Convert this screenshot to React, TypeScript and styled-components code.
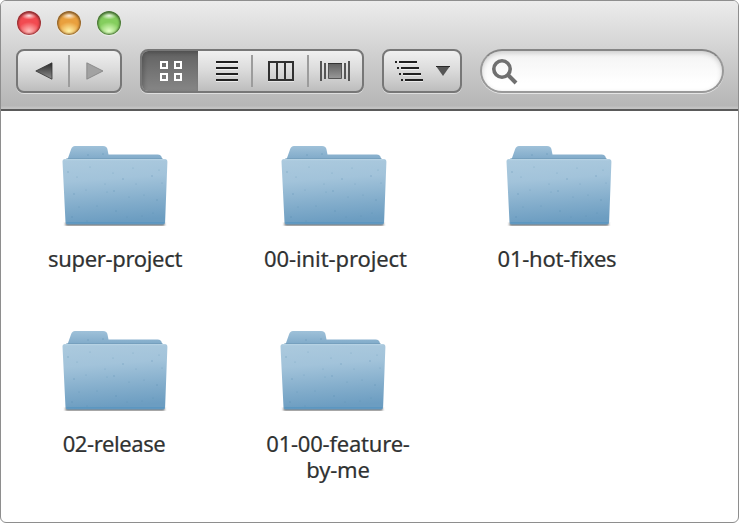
import React from "react";
import styled, { createGlobalStyle } from "styled-components";

const GlobalStyle = createGlobalStyle`
  * { box-sizing: border-box; }
  html, body { margin: 0; background: #fff; overflow: hidden; }
`;

const Window = styled.main`
  width: 739px;
  height: 523px;
  border: 1px solid #8e8e8e;
  border-radius: 6px;
  background: #fff;
  overflow: hidden;
  font-family: "Noto Sans", "Open Sans", sans-serif;
`;

const Header = styled.header`
  height: 110px;
  padding: 9px 14px 0 15px;
  border-bottom: 2px solid #5a5a5a;
  background: linear-gradient(#ececec 0%, #dedede 25%, #cbcbcb 58%, #b6b6b6 97%, #c3c3c3 99%);
`;

const Lights = styled.div`
  display: flex;
  gap: 16px;
  padding: 1px 0 0 1px;
  height: 39px;
`;

const Light = styled.span<{ $rim: string; $mid: string; $glow: string }>`
  width: 24px;
  height: 24px;
  border-radius: 50%;
  background:
    radial-gradient(ellipse 8px 4px at 50% 4.5px, rgba(255,255,255,.85), rgba(255,255,255,0)),
    radial-gradient(ellipse 11px 9px at 50% 20px, ${p => p.$glow}, transparent),
    ${p => p.$mid};
  box-shadow: inset 0 0 2px 1.2px ${p => p.$rim}, inset 0 2px 3px ${p => p.$rim}, 0 1px 1px rgba(255,255,255,.5);
`;

const Toolbar = styled.div`
  display: flex;
  height: 44px;
`;

const ButtonGroup = styled.div<{ $width: number; $gap: number }>`
  display: flex;
  width: ${p => p.$width}px;
  margin-right: ${p => p.$gap}px;
  height: 44px;
  border: 2px solid #777;
  border-radius: 8px;
  overflow: hidden;
  background: linear-gradient(#f0f0f0, #dadada 50%, #bdbdbd);
  box-shadow: 0 1px 0 rgba(255,255,255,.5);
`;

const Segment = styled.button<{ $width: number; $active?: boolean; $nudge?: number }>`
  display: flex;
  align-items: center;
  justify-content: center;
  flex: 0 0 ${p => p.$width}px;
  height: 40px;
  padding: 0 0 0 ${p => (p.$nudge ?? 0) * 2}px;
  border: 0;
  background: ${p => (p.$active ? "linear-gradient(#616161, #747474 50%, #868686)" : "transparent")};
  box-shadow: ${p => (p.$active ? "inset 2px 2px 4px rgba(0,0,0,.2)" : "none")};
`;

const Divider = styled.i`
  flex: 0 0 2px;
  height: 32px;
  margin-top: 4px;
  background: #9c9c9c;
`;

const Search = styled.label`
  display: flex;
  align-items: center;
  width: 244px;
  height: 44px;
  padding-left: 10px;
  border: 2px solid #999;
  border-top-color: #858585;
  border-radius: 22px;
  background: linear-gradient(#f3f3f3, #fff 80%);
  box-shadow: inset 0 2px 5px rgba(0,0,0,.17), 0 1px 0 rgba(255,255,255,.6);
`;

const SearchInput = styled.input`
  min-width: 0;
  flex: 1;
  border: 0;
  outline: 0;
  background: transparent;
`;

const Icon = styled.svg`
  display: block;
  flex: none;
  overflow: visible;
`;

const Files = styled.section`
  display: grid;
  grid-template-columns: 220px 222px 222px;
  grid-auto-rows: 185px;
  padding: 34px 0 0 4px;
`;

const FileItem = styled.article`
  display: flex;
  flex-direction: column;
  align-items: center;
`;

const FolderSvg = styled.svg<{ $shift: number }>`
  display: block;
  flex: none;
  margin-left: ${p => p.$shift * 2}px;
`;

const Label = styled.div<{ $shift: number; $spacing: number }>`
  margin: 16px 0 0 ${p => p.$shift * 2}px;
  color: #303232;
  font-size: 22px;
  line-height: 26px;
  letter-spacing: ${p => p.$spacing}px;
  font-feature-settings: "liga" 1;
  -webkit-text-stroke: .2px #303232;
  text-align: center;
  white-space: pre;
`;

const specks = [[8, 27], [17, 32], [30, 22], [43, 9], [53, 28], [73, 23], [92, 31], [99, 25], [102, 38], [14, 49], [26, 45], [47, 47], [54, 46], [69, 52], [84, 50], [97, 55], [19, 62], [37, 61], [56, 66], [67, 72], [82, 71], [12, 72], [93, 68], [27, 76], [28, 10], [45, 39], [76, 39], [63, 34]];

function Folder({ shift }: { shift: number }) {
  return (
    <FolderSvg width="110" height="84" viewBox="0 0 110 84" $shift={shift}>
      <defs>
        <linearGradient id="folderFront" x1="0" y1="0" x2=".12" y2="1">
          <stop offset="0" stopColor="#accade" /><stop offset=".35" stopColor="#a2c3da" />
          <stop offset=".75" stopColor="#80abca" /><stop offset="1" stopColor="#6c9dc1" />
        </linearGradient>
        <linearGradient id="folderBack" x1="0" y1="0" x2="0" y2="1">
          <stop offset="0" stopColor="#9fc1d9" /><stop offset="1" stopColor="#72a0c2" />
        </linearGradient>
        <filter id="folderShadow"><feGaussianBlur stdDeviation=".8" /></filter>
      </defs>
      <path d="M5.500 78h99v2.500h-99z" fill="#505050" filter="url(#folderShadow)" />
      <path d="M5 20v-4l3-3 3-8.500q1-3.500 4-3.500h28q4 0 4.500 3.500l1 5H97.500q4 0 4.500 4v6z" fill="url(#folderBack)" />
      <path d="M6 13.700H103" stroke="#668fac" opacity=".45" />
      <path d="M5 14H104.500q3 0 2.900 3l-2.300 60.500q0 2-2 2H7.500q-2 0-2-2L2.500 16.500q0-2.500 2.500-2.500z" fill="url(#folderFront)" />
      <path d="M4.500 14.700h101" stroke="#bdd6e6" strokeWidth=".8" />
      <path d="M6.500 77.900h97.500" stroke="#5794bf" strokeWidth="1.200" />
      {specks.map(([x, y], i) => (
        <circle key={i} cx={x} cy={y} r={i % 3 === 0 ? 0.7 : 0.5} fill="#4e83a6" opacity=".45" />
      ))}
    </FolderSvg>
  );
}

function ListIcon({ width = 22, indented = false }) {
  return (
    <Icon width={width} height="20" viewBox={`0 0 ${width} 20`}>
      {[0, 1, 2, 3].map(i => {
        const inset = indented ? i * 2 : 0;
        return (
          <g key={i} transform={`translate(${inset} ${i * 6})`}>
            {indented && <path d="M0 0h2v2H0z" fill="#202020" />}
            <path d={indented ? "M4 0h18v2H4z" : "M0 0h22v2H0z"} fill="#202020" />
            <path d={indented ? "M4 2h18v1H4z" : "M0 2h22v1H0z"} fill="#fff" opacity=".6" />
          </g>
        );
      })}
    </Icon>
  );
}

const files = [
  { lines: ["super-project"], folder: 0, label: 0, spacing: -0.33 },
  { lines: ["00-init-project"], folder: -2, label: -0.5, spacing: -0.1 },
  { lines: ["01-hot-fixes"], folder: 1, label: -1, spacing: -0.25 },
  { lines: ["02-release"], folder: 0, label: -1, spacing: -0.4 },
  { lines: ["01-00-feature-", "by-me"], folder: -3, label: 2, spacing: -0.22 },
];

export default function App() {
  return (
    <>
      <GlobalStyle />
      <Window>
        <Header>
          <Lights>
            <Light $rim="#912f32" $mid="#f24b51" $glow="#ffc0bd" />
            <Light $rim="#8c602a" $mid="#e9a03e" $glow="#fff3a8" />
            <Light $rim="#466f35" $mid="#85ce5e" $glow="#e2ffc6" />
          </Lights>
          <Toolbar>
            <ButtonGroup $width={106} $gap={18}>
              <Segment $width={50} $nudge={1} aria-label="Back">
                <Icon width="18" height="18" viewBox="0 0 18 18">
                  <defs><linearGradient id="backFill" x2="0" y2="1"><stop stopColor="#292929" /><stop offset="1" stopColor="#909090" /></linearGradient></defs>
                  <path d="M.8 9L17 .8v16.400z" fill="url(#backFill)" stroke="#343434" strokeWidth=".8" />
                </Icon>
              </Segment>
              <Divider />
              <Segment $width={50} aria-label="Forward">
                <Icon width="18" height="18" viewBox="0 0 18 18">
                  <path d="M17 9L.8.8v16.400z" fill="#a2a2a2" stroke="#828282" strokeWidth=".8" />
                </Icon>
              </Segment>
            </ButtonGroup>
            <ButtonGroup $width={224} $gap={18}>
              <Segment $width={56} $active $nudge={1} aria-label="Icon view">
                <Icon width="22" height="20" viewBox="-1 0 22 20">
                  <path d="M0 1h6v6H0zM14 1h6v6h-6zM0 13h6v6H0zM14 13h6v6h-6z" fill="none" stroke="#fff" strokeWidth="2" />
                </Icon>
              </Segment>
              <Segment $width={53} $nudge={2.5} aria-label="List view"><ListIcon /></Segment>
              <Divider />
              <Segment $width={54} $nudge={1} aria-label="Column view">
                <Icon width="26" height="20" viewBox="0 0 26 20">
                  <path d="M1 1h24v18H1zM9 1v18M17 1v18" fill="none" stroke="#303030" strokeWidth="2" />
                  <path d="M0 20.500h26" stroke="#fff" opacity=".5" />
                </Icon>
              </Segment>
              <Divider />
              <Segment $width={51} aria-label="Cover flow view">
                <Icon width="30" height="20" viewBox="0 0 30 20">
                  <defs><linearGradient id="coverFill" x2="0" y2="1"><stop stopColor="#606060" /><stop offset="1" stopColor="#999" /></linearGradient></defs>
                  <path d="M1 0v20M29 0v20M5 2v16M25 2v16" fill="none" stroke="#555" strokeWidth="2" />
                  <path d="M8.500 2.500h13v15h-13z" fill="url(#coverFill)" stroke="#555" />
                  <path d="M8 2.500h14" stroke="#333" />
                </Icon>
              </Segment>
            </ButtonGroup>
            <ButtonGroup $width={80} $gap={18}>
              <Segment $width={50} aria-label="Arrange by"><ListIcon width={28} indented /></Segment>
              <Segment $width={18} aria-label="Open arrangement menu">
                <Icon width="14" height="10" viewBox="0 0 14 10">
                  <path d="M0 0h14L7 10z" fill="#555" /><path d="M0 .5h14" stroke="#292929" />
                </Icon>
              </Segment>
            </ButtonGroup>
            <Search aria-label="Search">
              <Icon width="26" height="26" viewBox="0 0 26 26">
                <circle cx="10" cy="11" r="8.200" fill="none" stroke="#707070" strokeWidth="3.600" />
                <path d="M16 17l8 8" stroke="#707070" strokeWidth="4" />
              </Icon>
              <SearchInput />
            </Search>
          </Toolbar>
        </Header>
        <Files>
          {files.map(file => (
            <FileItem key={file.lines[0]}>
              <Folder shift={file.folder} />
              <Label $shift={file.label} $spacing={file.spacing}>{file.lines.join("\n")}</Label>
            </FileItem>
          ))}
        </Files>
      </Window>
    </>
  );
}
